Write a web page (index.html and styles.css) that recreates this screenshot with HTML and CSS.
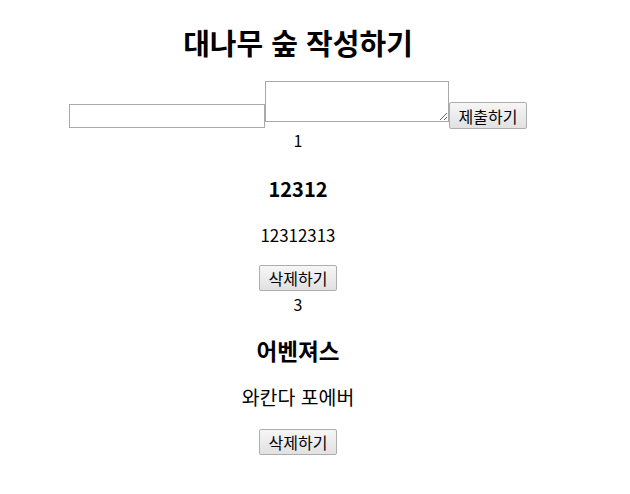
FILE: index.html
```html
<!DOCTYPE html>
<html lang="ko">
<head>
<meta charset="utf-8">
<title>대나무 숲</title>
<link rel="stylesheet" href="styles.css">
</head>
<body>
<div class="app">
  <h1 class="title">대나무 숲 작성하기</h1>
  <form class="write-form">
    <input class="write-title" type="text">
    <textarea class="write-content"></textarea>
    <button class="btn btn-submit" type="button">제출하기</button>
  </form>
  <div class="post">
    <div class="post-id">1</div>
    <h3 class="post-title">12312</h3>
    <p class="post-content">12312313</p>
    <button class="btn btn-delete" type="button">삭제하기</button>
  </div>
  <div class="post">
    <div class="post-id">3</div>
    <h3 class="post-title post-title-ko">어벤져스</h3>
    <p class="post-content post-content-ko">와칸다 포에버</p>
    <button class="btn btn-delete" type="button">삭제하기</button>
  </div>
</div>
</body>
</html>
```
FILE: styles.css
```css
html, body {
  margin: 0;
  padding: 0;
  background: #ffffff;
}
body {
  font-family: "Noto Sans CJK KR", "Noto Sans", sans-serif;
  font-size: 16px;
  color: #000;
}
.app {
  width: 580px;
  margin-left: 8px;
  text-align: center;
  display: flex;
  flex-direction: column;
  align-items: center;
}
.title {
  margin: 22px 0 0;
  font-size: 29px;
  line-height: 40px;
  font-weight: 700;
}
.write-form {
  margin: 19px 0 0;
  display: flex;
  align-items: flex-end;
  justify-content: center;
}
.write-title {
  box-sizing: border-box;
  width: 196px;
  height: 24px;
  margin: 0 0 1px;
  border: 1px solid #a9a9a9;
  padding: 1px 2px;
  font-family: inherit;
  font-size: 13px;
}
.write-content {
  box-sizing: border-box;
  width: 184px;
  height: 41px;
  margin: 0 0 7px;
  border: 1px solid #a9a9a9;
  padding: 2px;
  font-family: inherit;
  font-size: 13px;
}
.btn {
  box-sizing: border-box;
  width: 78px;
  height: 26px;
  padding: 0;
  border: 1px solid #adadad;
  border-radius: 2px;
  background: linear-gradient(#f6f6f6, #e1e1e1);
  font-family: "Noto Sans CJK KR", sans-serif;
  font-size: 16px;
  line-height: 22px;
  color: #000;
}
.btn-submit {
  height: 27px;
}
.post {
  display: flex;
  flex-direction: column;
  align-items: center;
}
.post-id {
  margin-top: 1px;
  line-height: 21px;
}
.post-title {
  margin: 24.5px 0 0;
  font-size: 20px;
  line-height: 25px;
  font-weight: 700;
}
.post-title-ko {
  font-size: 22.5px;
}
.post-content {
  margin: 23px 0 0;
  font-size: 16.9px;
  line-height: 21px;
}
.post-content-ko {
  font-size: 19.4px;
}
.btn-delete {
  margin-top: 20px;
}
.post + .post .post-id {
  margin-top: 3.5px;
}
.post + .post .post-title {
  margin-top: 22.5px;
}
.post + .post .btn-delete {
  margin-top: 22px;
}
```
